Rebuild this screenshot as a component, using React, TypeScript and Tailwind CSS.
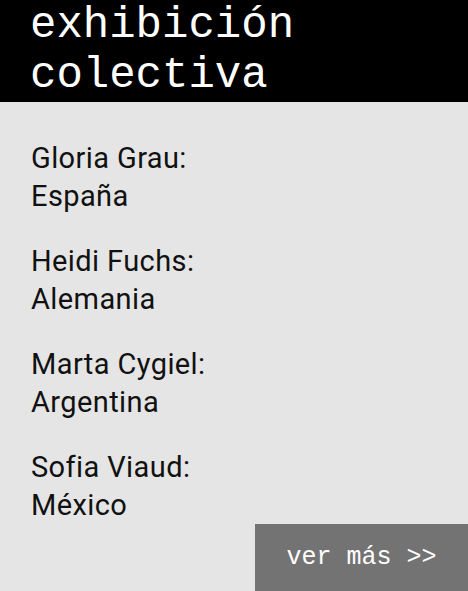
export default function App() {
  const people = [
    ["Gloria Grau:", "España"],
    ["Heidi Fuchs:", "Alemania"],
    ["Marta Cygiel:", "Argentina"],
    ["Sofia Viaud:", "México"],
  ];
  const mono = "font-['Courier_New','Nimbus_Mono_PS','FreeMono','Courier','Liberation_Mono',monospace]";
  return (
    <div className="w-[468px] h-[591px] overflow-hidden bg-[#e5e5e5] flex flex-col">
      <div className={`bg-black text-white h-[103px] px-[30px] text-[44px] leading-[50px] ${mono}`}>
        <div>exhibición</div>
        <div>colectiva</div>
      </div>
      <div className="flex flex-col gap-[28px] pl-[31px] pt-[38px] font-['Roboto',sans-serif] text-[29px] leading-[37.5px] tracking-[0.4px] text-[#111]">
        {people.map(([n, c]) => (
          <div key={n}>
            <div>{n}</div>
            <div>{c}</div>
          </div>
        ))}
      </div>
      <div className="flex justify-end mt-auto">
        <div className={`w-[213px] h-[67px] bg-[#737373] text-white flex items-center justify-center text-[25px] ${mono}`}>
          ver más &gt;&gt;
        </div>
      </div>
    </div>
  );
}
